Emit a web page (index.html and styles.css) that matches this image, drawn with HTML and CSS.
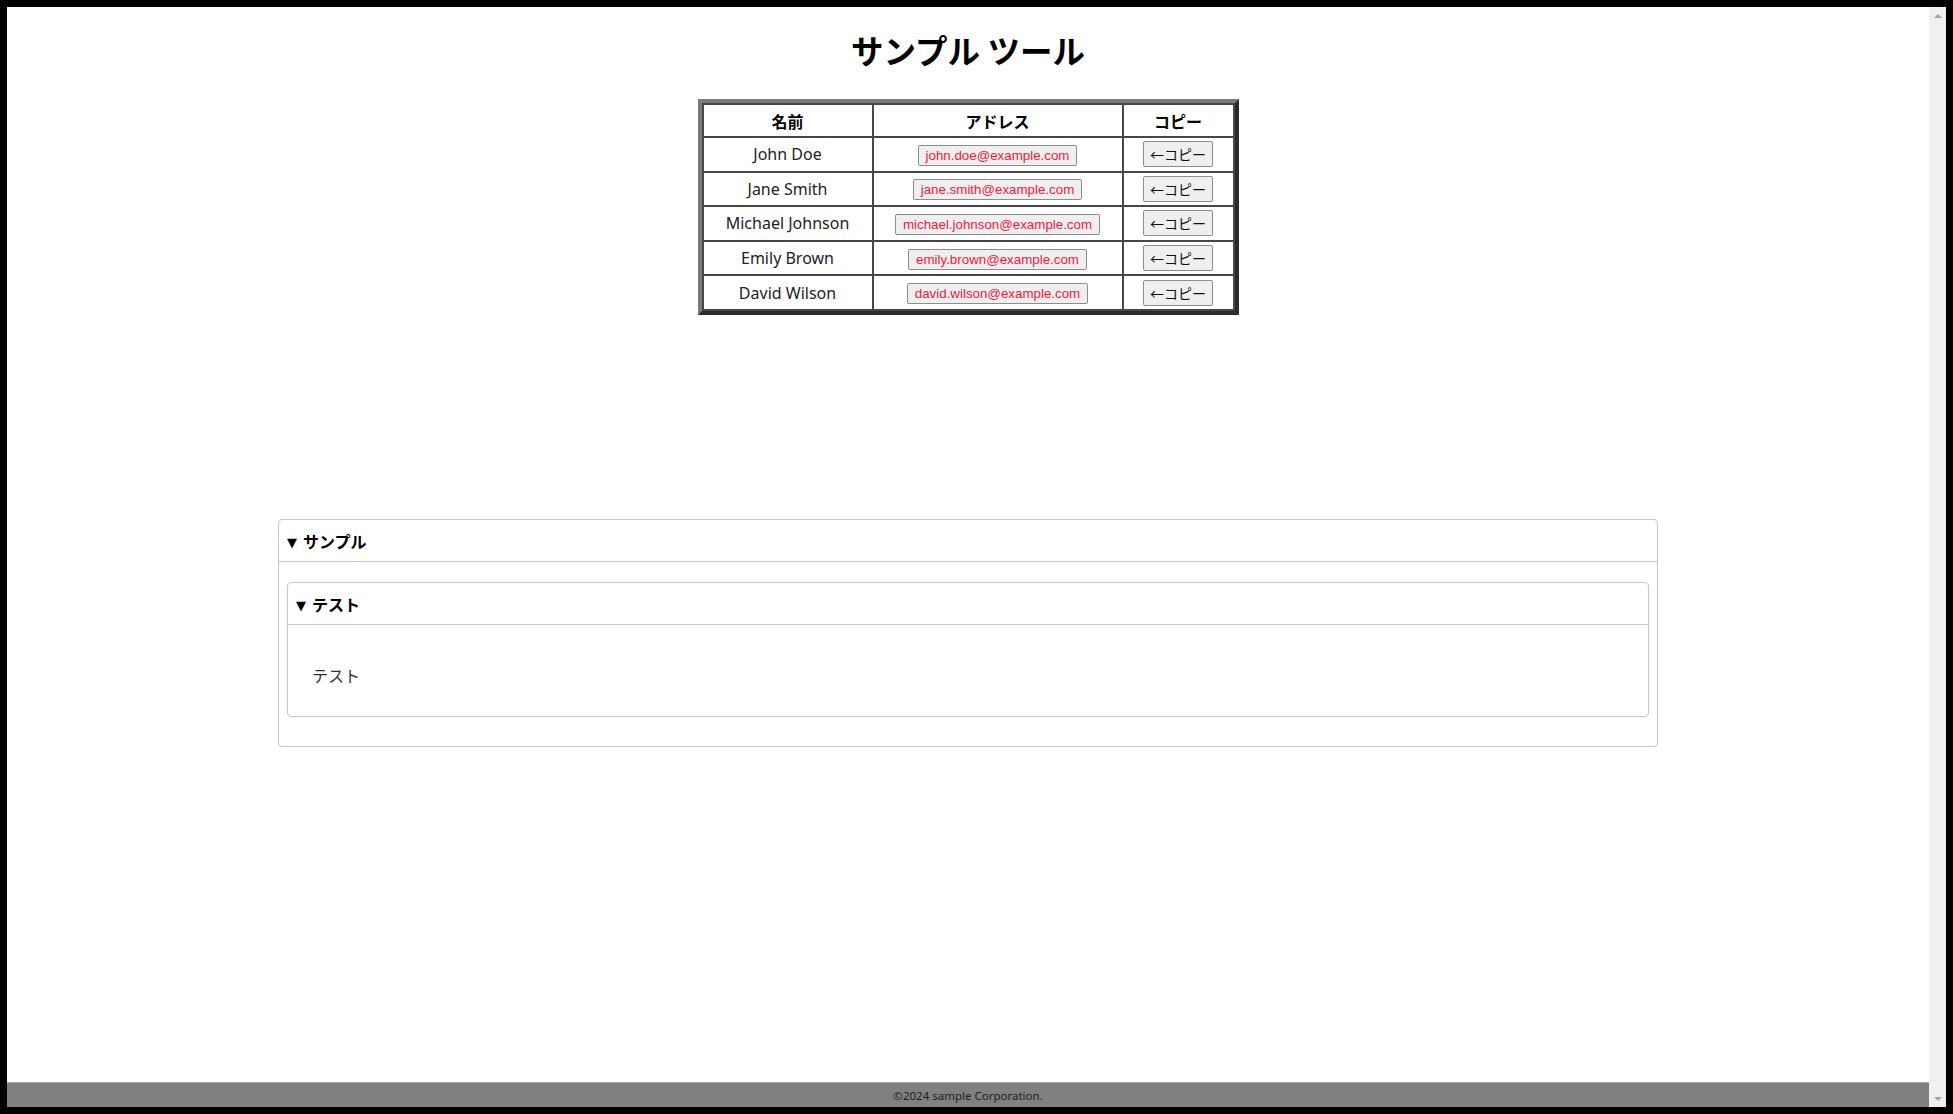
FILE: index.html
```html
<!DOCTYPE html>
<html lang="ja">
<head>
<meta charset="utf-8">
<title>サンプル ツール</title>
<link rel="stylesheet" href="styles.css">
</head>
<body>
<div class="frame">
  <div class="page">
    <main class="content">
      <h1 class="title">サンプル ツール</h1>
      <div class="table-wrap">
        <table class="people">
          <thead>
            <tr>
              <th class="c-name">名前</th>
              <th class="c-addr">アドレス</th>
              <th class="c-copy">コピー</th>
            </tr>
          </thead>
          <tbody>
            <tr>
              <td class="name">John Doe</td>
              <td><button class="email-btn" type="button">john.doe@example.com</button></td>
              <td><button class="copy-btn" type="button">←コピー</button></td>
            </tr>
            <tr>
              <td class="name">Jane Smith</td>
              <td><button class="email-btn" type="button">jane.smith@example.com</button></td>
              <td><button class="copy-btn" type="button">←コピー</button></td>
            </tr>
            <tr>
              <td class="name">Michael Johnson</td>
              <td><button class="email-btn" type="button">michael.johnson@example.com</button></td>
              <td><button class="copy-btn" type="button">←コピー</button></td>
            </tr>
            <tr>
              <td class="name">Emily Brown</td>
              <td><button class="email-btn" type="button">emily.brown@example.com</button></td>
              <td><button class="copy-btn" type="button">←コピー</button></td>
            </tr>
            <tr>
              <td class="name">David Wilson</td>
              <td><button class="email-btn" type="button">david.wilson@example.com</button></td>
              <td><button class="copy-btn" type="button">←コピー</button></td>
            </tr>
          </tbody>
        </table>
      </div>

      <details class="panel outer" open>
        <summary class="panel-summary">サンプル</summary>
        <div class="panel-body">
          <details class="panel inner" open>
            <summary class="panel-summary">テスト</summary>
            <div class="inner-body">
              <p class="inner-text">テスト</p>
            </div>
          </details>
        </div>
      </details>
    </main>
    <footer class="footer">©2024 sample Corporation.</footer>
  </div>
  <div class="scrollbar">
    <span class="sb-btn"><span class="arrow-up"></span></span>
    <span class="sb-btn"><span class="arrow-down"></span></span>
  </div>
</div>
</body>
</html>
```

FILE: styles.css
```css
html, body {
  margin: 0;
  padding: 0;
  background: #ffffff;
}

.frame {
  box-sizing: border-box;
  height: 1114px;
  border: 7px solid #000;
  display: flex;
  background: #fff;
}

.page {
  flex: 1;
  min-width: 0;
  display: flex;
  flex-direction: column;
}

.content {
  flex: 1;
  font-family: "Noto Sans", "Noto Sans CJK JP", sans-serif;
  color: #222;
}

.title {
  margin: 23px 0 0;
  font-family: "Noto Sans CJK JP", sans-serif;
  font-size: 32.5px;
  line-height: 40px;
  font-weight: 700;
  text-align: center;
  color: #000;
}

.table-wrap {
  display: flex;
  justify-content: center;
  margin-top: 29px;
}

.people {
  border-spacing: 0;
  border: 4px solid;
  border-color: #7b7b7b #2b2b2b #2b2b2b #7b7b7b;
  padding: 1px;
  background: #474747;
}

.people th,
.people td {
  box-sizing: border-box;
  background: #fff;
  border: 1px solid #474747;
  padding: 0 4px;
  text-align: center;
  vertical-align: middle;
}

.people th {
  height: 33px;
  font-family: "Noto Sans CJK JP", sans-serif;
  font-size: 16px;
  font-weight: 700;
  color: #000;
}

.c-name { width: 170px; }
.c-addr { width: 250px; }
.c-copy { width: 111px; }

.people tbody tr {
  height: 34.6px;
}

.name {
  font-size: 16px;
  color: #222;
}

.email-btn {
  font-family: "Liberation Sans", Arial, sans-serif;
  font-size: 13.333px;
  line-height: 15px;
  color: #f5163e;
  background: #efefef;
  border: 1px solid #8d8d8d;
  border-radius: 2px;
  padding: 2px 7px;
  margin: 0;
}

.copy-btn {
  font-family: "Noto Sans CJK JP", sans-serif;
  font-size: 14px;
  line-height: 18px;
  color: #111;
  background: #efefef;
  border: 1px solid #8d8d8d;
  border-radius: 2px;
  padding: 3px 6px;
  margin: 0;
}

.panel {
  box-sizing: border-box;
  border: 1px solid #c6c6c6;
  border-radius: 4px;
  background: #fff;
}

.panel.outer {
  width: 1380px;
  margin: 204px auto 0;
}

.panel-summary {
  list-style: none;
  display: block;
  height: 42px;
  box-sizing: border-box;
  padding: 10px 8px 0;
  font-family: "Noto Sans CJK JP", sans-serif;
  font-size: 16px;
  line-height: 22px;
  font-weight: 700;
  color: #000;
  border-bottom: 1px solid #c6c6c6;
  cursor: pointer;
  overflow: hidden;
}

.panel-summary::-webkit-details-marker {
  display: none;
}

.panel-summary::before {
  content: "▼";
  font-family: "DejaVu Sans", sans-serif;
  font-size: 13px;
  line-height: 12px;
  margin-right: 6px;
  vertical-align: 1px;
}

.panel-body {
  padding: 20px 8px 29px;
}

.inner-body {
  padding: 22px 24px 13px;
}

.inner-text {
  margin: 16px 0;
  font-family: "Noto Sans CJK JP", sans-serif;
  font-size: 16px;
  line-height: 24px;
  color: #333;
}

.footer {
  box-sizing: border-box;
  height: 25px;
  background: #808080;
  border-top: 1px solid #a8a8a8;
  display: flex;
  align-items: center;
  justify-content: center;
  font-family: "Noto Sans", "Noto Sans CJK JP", sans-serif;
  font-size: 11.5px;
  color: #1c1c1c;
}

.scrollbar {
  width: 17px;
  flex: 0 0 17px;
  background: #f0f0f0;
  display: flex;
  flex-direction: column;
  justify-content: space-between;
}

.sb-btn {
  height: 17px;
  display: flex;
  align-items: center;
  justify-content: center;
}

.arrow-up {
  width: 0;
  height: 0;
  border-left: 4px solid transparent;
  border-right: 4px solid transparent;
  border-bottom: 4px solid #a3a3a3;
}

.arrow-down {
  width: 0;
  height: 0;
  border-left: 4px solid transparent;
  border-right: 4px solid transparent;
  border-top: 4px solid #a3a3a3;
}
```
